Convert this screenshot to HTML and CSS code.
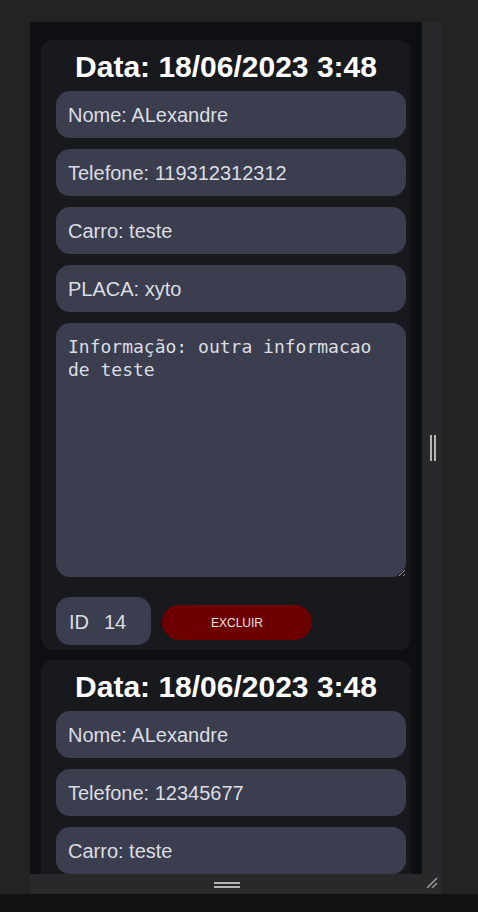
FILE: index.html
```html
<!DOCTYPE html>
<html lang="pt-BR">
<head>
<meta charset="utf-8">
<title>Registros</title>
<link rel="stylesheet" href="styles.css">
</head>
<body>
<div class="stage">
  <div class="window">
    <div class="frame">
      <div class="card">
        <h2 class="title">Data: 18/06/2023 3:48</h2>
        <div class="field">Nome: ALexandre</div>
        <div class="field">Telefone: 119312312312</div>
        <div class="field">Carro: teste</div>
        <div class="field">PLACA: xyto</div>
        <textarea class="info" readonly>Informação: outra informacao de teste</textarea>
        <div class="actions">
          <div class="id-box"><span>ID</span><span>14</span></div>
          <button class="delete">EXCLUIR</button>
        </div>
      </div>
      <div class="card">
        <h2 class="title">Data: 18/06/2023 3:48</h2>
        <div class="field">Nome: ALexandre</div>
        <div class="field">Telefone: 12345677</div>
        <div class="field">Carro: teste</div>
      </div>
    </div>
    <div class="side">
      <span class="vgrip"></span>
    </div>
    <div class="bottom">
      <span class="hgrip"></span>
      <svg class="corner" width="14" height="14" viewBox="0 0 14 14">
        <line x1="2" y1="12" x2="12" y2="2" stroke="#9a9a9a" stroke-width="1.6"/>
        <line x1="7" y1="12" x2="12" y2="7" stroke="#9a9a9a" stroke-width="1.6"/>
      </svg>
    </div>
  </div>
  <div class="floor"></div>
</div>
</body>
</html>
```
FILE: styles.css
```css
html, body {
  margin: 0;
  padding: 0;
  background: #232323;
  height: 912px;
  overflow: hidden;
}
.stage {
  display: flex;
  flex-direction: column;
  height: 912px;
}
.window {
  margin: 22px 0 0 30px;
  display: grid;
  grid-template-columns: 392px 20px;
  grid-template-rows: 852px 20px;
  width: 412px;
}
.frame {
  background: #0e0f12;
  padding: 18px 11px 0;
  overflow: hidden;
  box-sizing: border-box;
}
.side {
  background: #29292b;
  border-top-right-radius: 3px;
  display: flex;
  align-items: center;
  justify-content: center;
}
.vgrip {
  width: 2px;
  height: 26px;
  border-left: 2px solid #b4b4b4;
  border-right: 2px solid #b4b4b4;
  margin-left: 1px;
}
.bottom {
  grid-column: 1 / 3;
  background: #29292b;
  position: relative;
  display: flex;
  justify-content: center;
  align-items: center;
}
.hgrip {
  width: 26px;
  height: 2px;
  border-top: 2px solid #b4b4b4;
  border-bottom: 2px solid #b4b4b4;
  margin-left: -18px;
  margin-top: 1px;
}
.corner {
  position: absolute;
  right: 3px;
  bottom: 4px;
}
.floor {
  flex: 1;
  background: #121212;
}
.card {
  background: #18191d;
  border-radius: 12px;
  padding: 10px 5px 5px 15px;
  margin-bottom: 10px;
  width: 370px;
  box-sizing: border-box;
}
.title {
  margin: 0 0 7px -10px;
  font-family: "Liberation Sans", Arial, sans-serif;
  font-weight: bold;
  font-size: 30px;
  line-height: 34px;
  color: #ffffff;
  text-align: center;
}
.field {
  height: 47px;
  box-sizing: border-box;
  background: #3a3e4e;
  border-radius: 14px;
  margin-bottom: 11px;
  padding: 2px 0 0 12px;
  display: flex;
  align-items: center;
  font-family: "Liberation Sans", Arial, sans-serif;
  font-size: 20px;
  color: #dcdde2;
}
.info {
  display: block;
  width: 350px;
  height: 254px;
  box-sizing: border-box;
  margin: 0;
  background: #3a3e4e;
  border: none;
  border-radius: 14px;
  padding: 12px 12px;
  font-family: "DejaVu Sans Mono", monospace;
  font-size: 18px;
  line-height: 23px;
  color: #dcdde2;
  resize: vertical;
  outline: none;
}
.actions {
  margin-top: 20px;
  display: flex;
  align-items: center;
  gap: 11px;
}
.id-box {
  width: 95px;
  height: 48px;
  box-sizing: border-box;
  background: #3a3e4e;
  border-radius: 14px;
  padding: 2px 0 0 13px;
  display: flex;
  align-items: center;
  gap: 15px;
  font-family: "Liberation Sans", Arial, sans-serif;
  font-size: 20px;
  color: #dcdde2;
}
.delete {
  width: 150px;
  height: 35px;
  margin-top: 3px;
  background: #6c0000;
  border: none;
  border-radius: 18px;
  font-family: "Liberation Sans", Arial, sans-serif;
  font-size: 12px;
  color: #e6e0e0;
  padding: 0;
}
```
